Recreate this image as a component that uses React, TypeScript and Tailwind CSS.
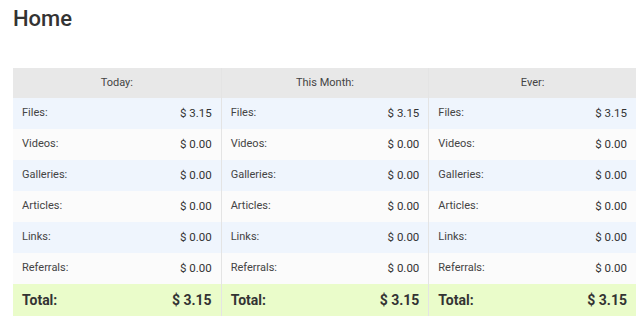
import React from "react";

const rows = [
  ["Files:", "$ 3.15"],
  ["Videos:", "$ 0.00"],
  ["Galleries:", "$ 0.00"],
  ["Articles:", "$ 0.00"],
  ["Links:", "$ 0.00"],
  ["Referrals:", "$ 0.00"],
];

const cols = ["Today:", "This Month:", "Ever:"];

export default function App() {
  return (
    <div className="w-[640px] h-[320px] bg-white overflow-hidden" style={{ fontFamily: "Roboto, 'Liberation Sans', sans-serif" }}>
      <h1 className="pl-[13px] pt-[5px] h-[68px] text-[22px] font-medium text-[#333] leading-[28px]">Home</h1>
      <div className="ml-[13px] w-[623px] grid grid-cols-3">
        {cols.map((c, ci) => (
          <div key={c} className={`flex flex-col ${ci > 0 ? "border-l border-[#e4e4e4]" : ""}`}>
            <div className="h-[30px] bg-[#e8e8e8] flex items-center justify-center text-[11px] text-[#444]">{c}</div>
            {rows.map(([l, v], ri) => (
              <div
                key={l}
                className={`h-[31px] flex items-center justify-between px-[9px] text-[11px] ${ri % 2 === 0 ? "bg-[#eff5fd]" : "bg-[#fbfbfb]"}`}
              >
                <span className="text-[#444]">{l}</span>
                <span className="text-[#333] text-[11.5px]">{v}</span>
              </div>
            ))}
            <div className="h-[32px] bg-[#eafcca] flex items-center justify-between px-[9px] text-[14px] font-bold text-[#333]">
              <span>Total:</span>
              <span>$ 3.15</span>
            </div>
          </div>
        ))}
      </div>
    </div>
  );
}
